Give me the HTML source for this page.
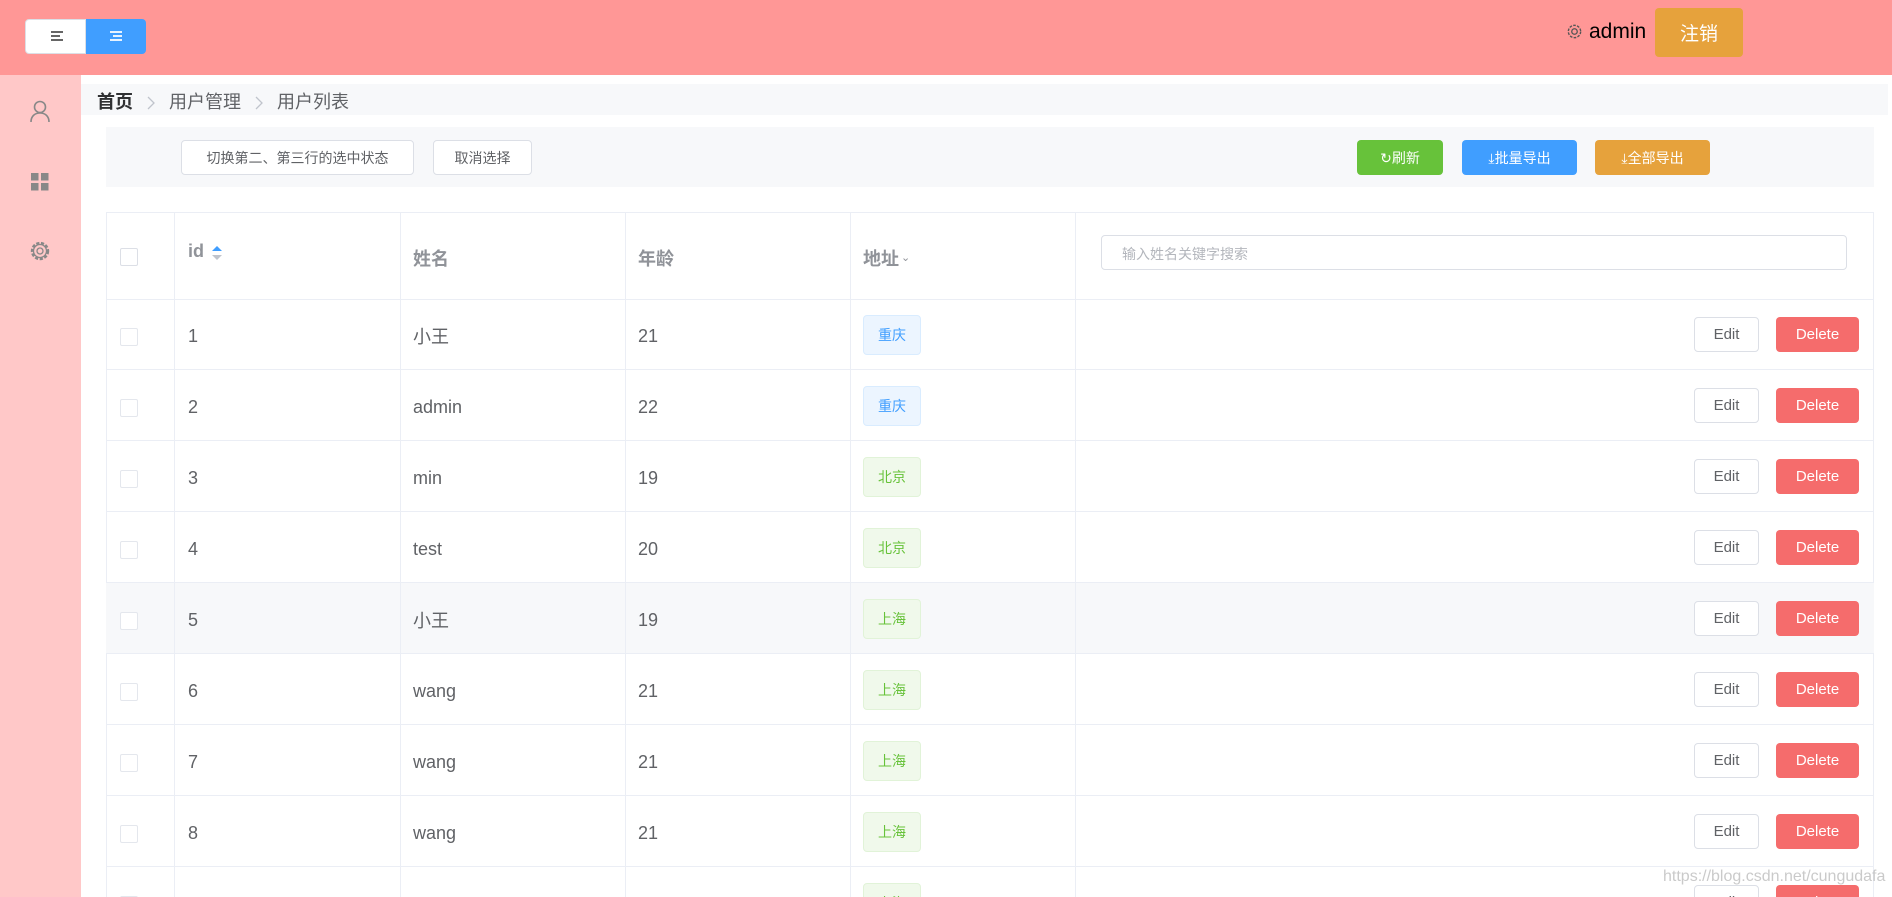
<!DOCTYPE html>
<html style="width:1892px;height:897px;overflow:hidden"><head><meta charset="utf-8"><style>
*{box-sizing:border-box;margin:0;padding:0}
body{width:1892px;height:897px;overflow:hidden;background:#fff;font-family:"Liberation Sans","Noto Sans CJK SC",sans-serif;position:relative}
.a{position:absolute}
.hdr{left:0;top:0;width:1892px;height:75px;background:#ff9796}
.side{left:0;top:75px;width:81px;height:822px;background:#ffc8c8}
.btn{position:absolute;border-radius:4px;font-size:15px;display:flex;align-items:center;justify-content:center}
.wb{background:#fff;border:1px solid #dcdfe6;color:#606266}
.row{position:absolute;left:106px;width:1768px;height:71px;border-bottom:1px solid #ebeef5}
.cell{position:absolute;top:0;height:100%;border-right:1px solid #ebeef5;display:flex;align-items:center;font-size:18px;color:#606266}
.cb{position:absolute;left:14px;width:18px;height:18px;border:1px solid #dcdfe6;border-radius:2px;background:#fff}
.tag{position:absolute;left:12px;width:58px;height:40px;border-radius:4px;font-size:14px;display:flex;align-items:center;justify-content:center}
.blue{background:#ecf5ff;border:1px solid #d9ecff;color:#409eff}
.green{background:#f0f9eb;border:1px solid #e1f3d8;color:#67c23a}
.th{font-weight:bold;color:#909399;font-size:18px}
.sep{display:inline-block;margin:0 14px;vertical-align:middle}
</style></head><body>
<div class="a hdr"></div>
<div class="a" style="left:25px;top:19px;width:61px;height:35px;background:#fff;border-radius:4px 0 0 4px;border:1px solid #dcdfe6"></div>
<div class="a" style="left:86px;top:19px;width:60px;height:35px;background:#409eff;border-radius:0 4px 4px 0"></div>
<svg class="a" style="left:51px;top:31px" width="12" height="10"><path d="M0 1h12M0 5h9M0 9h12" stroke="#333" stroke-width="1.5"/></svg>
<svg class="a" style="left:110px;top:31px" width="12" height="10"><path d="M0 1h12M3 5h9M0 9h12" stroke="#fff" stroke-width="1.8"/></svg>
<svg class="a" style="left:1566px;top:23px" width="17" height="17" viewBox="0 0 16 16"><circle cx="8" cy="8" r="5.8" fill="none" stroke="#555" stroke-width="1.3" stroke-dasharray="2.5 1.2"/><circle cx="8" cy="8" r="2.6" fill="none" stroke="#555" stroke-width="1.2"/></svg>
<div class="a" style="left:1589px;top:20px;font-size:21px;color:#000">admin</div>
<div class="btn" style="left:1655px;top:8px;width:88px;height:49px;background:#e6a23c;color:#fff;font-size:19px">注销</div>
<div class="a side"></div>
<svg class="a" style="left:29px;top:100px" width="22" height="24" viewBox="0 0 22 24"><circle cx="11" cy="7" r="5.5" fill="none" stroke="#888" stroke-width="1.6"/><path d="M2 22c0-6 4-9 9-9s9 3 9 9" fill="none" stroke="#888" stroke-width="1.6"/></svg>
<svg class="a" style="left:31px;top:173px" width="18" height="18"><rect x="0" y="0" width="7.5" height="7.5" fill="#888"/><rect x="10" y="0" width="7.5" height="7.5" fill="#888"/><rect x="0" y="10" width="7.5" height="7.5" fill="#888"/><rect x="10" y="10" width="7.5" height="7.5" fill="#888"/></svg>
<svg class="a" style="left:29px;top:240px" width="22" height="22" viewBox="0 0 22 22"><circle cx="11" cy="11" r="8" fill="none" stroke="#888" stroke-width="2.4" stroke-dasharray="3.2 1.6"/><circle cx="11" cy="11" r="6.5" fill="none" stroke="#888" stroke-width="1.3"/><circle cx="11" cy="11" r="3" fill="none" stroke="#888" stroke-width="1.3"/></svg>
<div class="a" style="left:81px;top:84px;width:1807px;height:31px;background:#f7f8fa"></div>
<div class="a" style="left:97px;top:88px;font-size:18px;color:#303133;white-space:nowrap"><b>首页</b><svg class="sep" width="8" height="14"><path d="M1 1l6 6-6 6" fill="none" stroke="#c0c4cc" stroke-width="1.3"/></svg><span style="color:#606266">用户管理</span><svg class="sep" width="8" height="14"><path d="M1 1l6 6-6 6" fill="none" stroke="#c0c4cc" stroke-width="1.3"/></svg><span style="color:#606266">用户列表</span></div>
<div class="a" style="left:106px;top:127px;width:1768px;height:60px;background:#f7f8fa"></div>
<div class="btn wb" style="left:181px;top:140px;width:233px;height:35px;font-size:14px">切换第二、第三行的选中状态</div>
<div class="btn wb" style="left:433px;top:140px;width:99px;height:35px;font-size:14px">取消选择</div>
<div class="btn" style="left:1357px;top:140px;width:86px;height:35px;background:#67c23a;color:#fff;font-size:14px">↻刷新</div>
<div class="btn" style="left:1462px;top:140px;width:115px;height:35px;background:#409eff;color:#fff;font-size:14px">⤓批量导出</div>
<div class="btn" style="left:1595px;top:140px;width:115px;height:35px;background:#e6a23c;color:#fff;font-size:14px">⤓全部导出</div>
<div class="a" style="left:106px;top:212px;width:1768px;height:685px;border:1px solid #ebeef5;border-bottom:none"></div>
<div class="row" style="top:212px;height:88px">
 <div class="cell" style="left:0;width:69px"><div class="cb" style="top:36px"></div></div>
 <div class="cell th" style="left:69px;width:226px;align-items:flex-start;padding:29px 0 0 13px">id<svg style="margin:5px 0 0 8px" width="10" height="14"><path d="M5 0l5 5H0z" fill="#409eff"/><path d="M5 14l5-5H0z" fill="#c0c4cc"/></svg></div>
 <div class="cell th" style="left:295px;width:225px;padding:4px 0 0 12px">姓名</div>
 <div class="cell th" style="left:520px;width:225px;padding:4px 0 0 12px">年龄</div>
 <div class="cell th" style="left:745px;width:225px;padding:4px 0 0 12px">地址<span style="font-size:11px;font-weight:normal;margin-left:2px">⌄</span></div>
 <div class="cell" style="left:970px;width:798px;border-right:none"><div style="position:absolute;left:25px;top:23px;width:746px;height:35px;border:1px solid #dcdfe6;border-radius:4px;font-size:14px;color:#b3b6bc;padding:8px 0 0 20px">输入姓名关键字搜索</div></div>
</div>
<div id="rows"></div>
<script>
var d=[["1","小王","21","重庆","blue"],["2","admin","22","重庆","blue"],["3","min","19","北京","green"],["4","test","20","北京","green"],["5","小王","19","上海","green"],["6","wang","21","上海","green"],["7","wang","21","上海","green"],["8","wang","21","上海","green"],["","","","上海","green"]];
var h="";
d.forEach(function(r,i){var t=299+i*71;
h+='<div class="row" style="top:'+t+'px;'+(i==4?'background:#f7f8fa':'')+'">'+
'<div class="cell" style="left:0;width:69px"><div class="cb" style="top:29px;border-color:#e4e7ed"></div></div>'+
'<div class="cell" style="left:69px;width:226px;padding:4px 0 0 13px">'+r[0]+'</div>'+
'<div class="cell" style="left:295px;width:225px;padding:4px 0 0 12px">'+r[1]+'</div>'+
'<div class="cell" style="left:520px;width:225px;padding:4px 0 0 12px">'+r[2]+'</div>'+
'<div class="cell" style="left:745px;width:225px"><div class="tag '+r[4]+'" style="top:16px">'+r[3]+'</div></div>'+
'<div class="cell" style="left:970px;width:798px;border-right:none">'+
'<div class="btn wb" style="left:618px;top:18px;width:65px;height:35px;position:absolute">Edit</div>'+
'<div class="btn" style="left:700px;top:18px;width:83px;height:35px;position:absolute;background:#f56c6c;color:#fff">Delete</div></div></div>';});
document.getElementById("rows").innerHTML=h;
</script>
<div class="a" style="left:1663px;top:868px;font-size:16px;color:rgba(180,180,180,0.7)">https://blog.csdn.net/cungudafa</div>
</body></html>
